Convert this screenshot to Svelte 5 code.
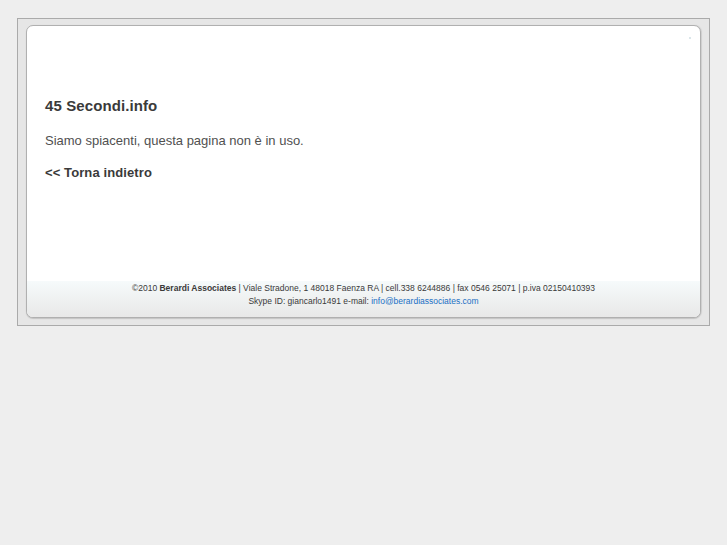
<script>
  const backLabel = '<< Torna indietro';
</script>

<div class="page">
  <div class="frame">
    <div class="card">
      <span class="speck"></span>
      <main class="content">
        <h1>45 Secondi.info</h1>
        <p>Siamo spiacenti, questa pagina non è in uso.</p>
        <a class="back" href="#top">{backLabel}</a>
      </main>
      <footer class="foot">
        <div>©2010 <b>Berardi Associates</b> | Viale Stradone, 1 48018 Faenza RA | cell.338 6244886 | fax 0546 25071 | p.iva 02150410393</div>
        <div>Skype ID: giancarlo1491 e-mail: <a href="#top">info@berardiassociates.com</a></div>
      </footer>
    </div>
  </div>
</div>

<style>
  :global(body) {
    margin: 0;
    background: #eeeeee;
  }

  .page {
    height: 545px;
    padding: 18px 18px 0 17px;
    box-sizing: border-box;
    font-family: "Liberation Sans", Arial, sans-serif;
    color: #333;
  }

  .frame {
    width: 693px;
    height: 308px;
    box-sizing: border-box;
    padding: 6px 8px 7px 8px;
    background: #e6e6e6;
    border: 1px solid #aaaaaa;
  }

  .card {
    position: relative;
    display: flex;
    flex-direction: column;
    height: 100%;
    box-sizing: border-box;
    background: #fff;
    border: 1px solid #b0b0b0;
    border-radius: 7px;
    box-shadow: 0 1px 1px #c4c4c4, 1px 0 1px #d0d0d0;
    overflow: hidden;
  }

  .speck {
    position: absolute;
    top: 11px;
    right: 9px;
    width: 2px;
    height: 2px;
    background: #dbe6ea;
  }

  .content {
    flex: 1;
    padding: 70px 18px 0;
  }

  h1 {
    margin: 0;
    font-size: 15px;
    line-height: 20px;
    font-weight: bold;
    letter-spacing: 0.1px;
    color: #3a3a3a;
  }

  p {
    margin: 16px 0 0;
    font-size: 13px;
    line-height: 18px;
    color: #505050;
  }

  .back {
    display: block;
    margin-top: 14px;
    font-size: 13px;
    line-height: 18px;
    font-weight: bold;
    letter-spacing: 0.1px;
    color: #3a3a3a;
    text-decoration: none;
  }

  .foot {
    height: 36px;
    background: linear-gradient(#f6fafb, #e8e8e8);
    font-size: 8.5px;
    line-height: 13px;
    text-align: center;
    color: #3a3a3a;
  }

  .foot div:first-child {
    padding-top: 1px;
  }

  .foot a {
    color: #1a6fc4;
    text-decoration: none;
  }
</style>
